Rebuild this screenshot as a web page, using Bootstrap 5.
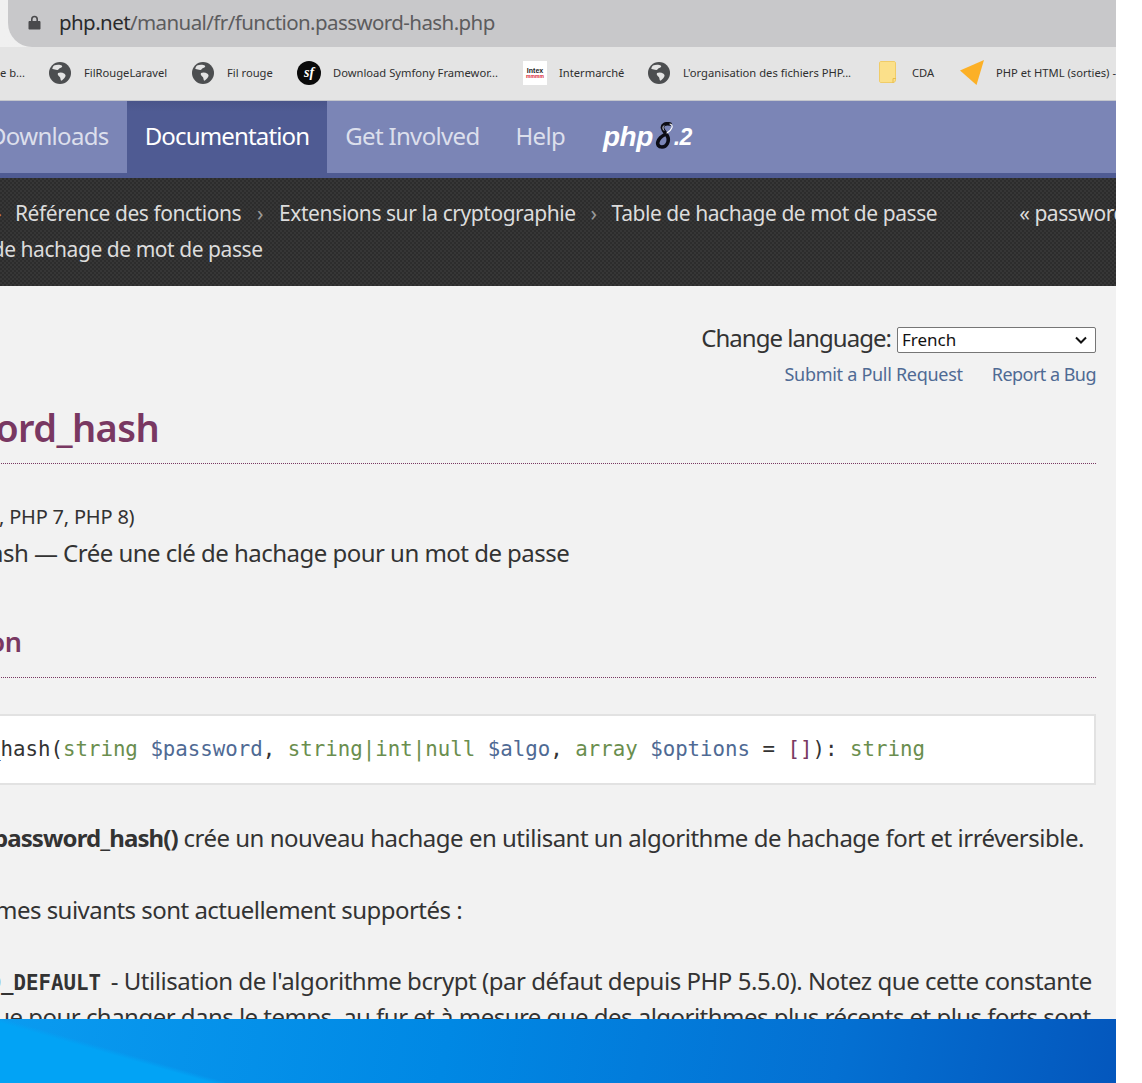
<!DOCTYPE html>
<html lang="fr">
<head>
  <meta charset="UTF-8">
  <title>PHP: password_hash - Manual</title>
  <link href="https://cdn.jsdelivr.net/npm/bootstrap@5.3.0/dist/css/bootstrap.min.css" rel="stylesheet">
  <style>
    html, body { margin: 0; height: 100%; background: #fff; overflow: hidden; }
    .shot { width: 1116px; height: 1083px; font-family: "Noto Sans", sans-serif; color: #333; overflow: hidden; }

    /* browser chrome */
    .url-row { height: 47px; background: linear-gradient(to right, #f0f0f0, #e6e6e6); padding-left: 8px; flex: none; }
    .url-pill { height: 47px; background: #c8c8ca; border-radius: 0 0 0 24px; padding: 0 0 3px 20px; gap: 18px; }
    .url-text { font-size: 20.5px; color: #5c5c5e; letter-spacing: -.58px; }
    .url-text b { font-weight: 400; color: #2a2a2c; }
    .bm-row { height: 54px; padding-bottom: 2px; background: #e4e4e4; border-bottom: 1px solid #c4c6cc; flex: none; font-size: 11.2px; color: #2f2f2f; white-space: nowrap; }
    .bm-item { flex: none; gap: 13px; }
    .bm-tight { gap: 12px; }
    .bm-folder { gap: 15px; }
    .bm-item span { display: block; padding-top: 1px; }
    .bm-first { width: 49px; }
    .bm-1 { width: 143px; }
    .bm-2 { width: 105px; }
    .bm-3 { width: 226px; }
    .bm-4 { width: 125px; }
    .bm-5 { width: 231px; }
    .bm-6 { width: 81px; }
    .sf-mark { width: 24px; height: 24px; border-radius: 50%; background: #0a0a0a; color: #fff; font: italic 700 14px/24px "Liberation Serif", serif; text-align: center; }
    .im-mark { width: 24px; height: 24px; background: #fff; text-align: center; font: 700 7px/7px "Liberation Sans", sans-serif; color: #222; padding-top: 6px; }
    .im-mark i { display: block; font-style: normal; font-size: 5px; line-height: 5px; color: #d8232f; }

    /* php.net nav */
    .php-nav { height: 77px; background: #7b85b6; border-bottom: 5px solid #4f5b93; flex: none; margin-left: -29px; font-size: 24px; white-space: nowrap; }
    .php-nav a { display: block; padding: 0 18px; line-height: 70px; text-decoration: none; }
    .php-nav a.on { background: linear-gradient(#4a558a, #4f5b93 15%, #4f5b93); color: #fff; letter-spacing: -.035em; }
    .php-nav a.off { color: #dcdfec; letter-spacing: -.028em; }
    .logo-wrap { margin-left: 20px; font: italic 700 28px/1 "Liberation Sans", sans-serif; color: #fff; letter-spacing: -.02em; }
    .logo-wrap svg { margin: 0 -3px 0 0; }
    .logo-wrap em { font-size: 23px; }

    /* breadcrumbs */
    .crumbs { height: 108px; flex: none; background: #303030 repeating-conic-gradient(#2c2c2c 0 25%, #363636 0 50%) 0 0 / 4px 4px; color: #dcdcdc; font-size: 21px; white-space: nowrap; letter-spacing: -.45px; padding-top: 17px; }
    .crumbs .sep { color: #9b9b9b; width: 38px; text-align: center; flex: none; }
    .crumbs .sep-b { width: 36px; }
    .crumbs .sep-first { color: #e2a13c; width: 20px; margin-left: -5px; flex: none; }
    .crumb-line { height: 36px; line-height: 36px; }
    .prev-link { margin-left: 82px; }
    .crumb-2 { margin-left: -63px; }

    /* manual */
    .manual { flex: 1 1 auto; min-height: 0; overflow: hidden; background: #f2f2f2; white-space: nowrap; font-size: 24px; line-height: 36px; letter-spacing: -.022em; }
    .pad-r { padding-right: 20px; }
    .lang-row { margin-top: 41px; height: 26px; line-height: 26px; gap: 6px; }
    .lang-row label { padding-bottom: 4px; letter-spacing: -.04em; }
    .lang-sel { width: 199px; height: 26px; font: 17px/20px "Noto Sans", sans-serif; padding: 0 0 0 4px; border: 1px solid #767676; border-radius: 2px; color: #111; appearance: none; background: #fff url("data:image/svg+xml,%3Csvg xmlns='http://www.w3.org/2000/svg' width='12' height='8'%3E%3Cpath d='M1 1.500 6 6.500 11 1.500' fill='none' stroke='%23111' stroke-width='2'/%3E%3C/svg%3E") no-repeat right 8px center; }
    .edit-links { margin-top: 8px; height: 26px; line-height: 26px; font-size: 18px; gap: 29px; }
    .edit-links a { color: #4f6a94; text-decoration: none; }
    .edit-links a:first-child { letter-spacing: -.016em; }
    .plum { color: #793862; }
    .doc-h1 { margin: 10px 0 0 -117px; padding-bottom: 6px; height: 67px; font-size: 38px; line-height: 60px; font-weight: 600; letter-spacing: -.015em; border-bottom: 1px dotted #793862; width: 1213px; }
    .ver { margin: 38px 0 0 -138px; line-height: 30px; font-size: 20px; letter-spacing: -.01em; color: #333; }
    .refname { margin: 3px 0 0 -139px; }
    .doc-h2 { margin: 51px 0 0 -124px; padding-bottom: 15px; height: 56px; font-size: 27px; line-height: 40px; font-weight: 600; border-bottom: 1px dotted #793862; width: 1220px; }
    .sig { margin: 36px 20px 0 -20px; height: 71px; background: #fff; border: 2px solid #e2e2e2; font: 20.75px/66px "DejaVu Sans Mono", monospace; color: #333; letter-spacing: 0; overflow: hidden; }
    .sig-inner { margin-left: -94px; }
    .ty { color: #6a8e4e; }
    .va { color: #4f6a94; }
    .para1 { margin: 35px 0 0 -7px; letter-spacing: -.0205em; }
    .para2 { margin: 36px 0 0 -131px; }
    .para3 { margin: 35px 0 0 -99px; letter-spacing: -.019em; }
    .para4 { margin: 0 0 0 -19px; }
    .para3 code { font: 700 20.75px "DejaVu Sans Mono", monospace; color: #333; letter-spacing: 0; margin-right: 4px; }
    .para1 strong { letter-spacing: -.038em; }

    .taskbar { height: 64px; flex: none; background:
      linear-gradient(to bottom left, rgba(2,163,245,0) 49%, #02a3f5 53%) 0 0 / 225px 64px no-repeat,
      linear-gradient(100deg, #0a9bf0 0, #0088e4 40%, #0470d2 75%, #0457bd 100%); }
  </style>
</head>
<body>
<div class="shot d-flex flex-column">

  <div class="url-row">
    <div class="url-pill d-flex align-items-center">
      <svg width="13" height="15" viewBox="0 0 13 15"><path d="M3 6V4.2a3.500 3.500 0 0 1 7 0V6h1.400c.6 0 1.100.5 1.100 1.100v6.300c0 .6-.5 1.100-1.100 1.100H1.600C1 14.500.5 14 .5 13.400V7.100C.5 6.500 1 6 1.600 6zM4.600 6h3.800V4.200a1.900 1.900 0 0 0-3.800 0z" fill="#4a4a4c"/></svg>
      <div class="url-text"><b>php.net</b>/manual/fr/function.password-hash.php</div>
    </div>
  </div>

  <div class="bm-row d-flex align-items-center">
    <div class="bm-item bm-first"><span>e b...</span></div>
    <div class="bm-item bm-1 d-flex align-items-center">
      <svg width="22" height="22" viewBox="0 0 22 22"><circle cx="11" cy="11" r="11" fill="#4c4e50"/><path d="M5 3.500c2.500-1 6-1.200 8 .3.800.9-.5 1.900-2 2.300-1.200.4-1 1.800-2.400 1.800C6.500 8.100 5 6.800 3.300 7 3.500 5.500 4 4.400 5 3.500zM9 11c2-.9 4.500-.6 6.500.7 1 .7 1.500 2 .6 3.300-1 1.700-2.600 3.200-4 3.800-.8-1.400-.5-2.800-1.300-3.700C9.800 14.200 8 12.700 9 11z" fill="#e4e4e4"/></svg>
      <span>FilRougeLaravel</span>
    </div>
    <div class="bm-item bm-2 d-flex align-items-center">
      <svg width="22" height="22" viewBox="0 0 22 22"><circle cx="11" cy="11" r="11" fill="#4c4e50"/><path d="M5 3.500c2.500-1 6-1.200 8 .3.800.9-.5 1.900-2 2.300-1.200.4-1 1.800-2.400 1.800C6.500 8.100 5 6.800 3.300 7 3.500 5.500 4 4.400 5 3.500zM9 11c2-.9 4.500-.6 6.500.7 1 .7 1.500 2 .6 3.300-1 1.700-2.600 3.200-4 3.800-.8-1.400-.5-2.800-1.300-3.700C9.800 14.200 8 12.700 9 11z" fill="#e4e4e4"/></svg>
      <span>Fil rouge</span>
    </div>
    <div class="bm-item bm-tight bm-3 d-flex align-items-center">
      <div class="sf-mark">sf</div>
      <span>Download Symfony Framewor...</span>
    </div>
    <div class="bm-item bm-tight bm-4 d-flex align-items-center">
      <div class="im-mark">Intex<i>mmmm</i></div>
      <span>Intermarché</span>
    </div>
    <div class="bm-item bm-5 d-flex align-items-center">
      <svg width="22" height="22" viewBox="0 0 22 22"><circle cx="11" cy="11" r="11" fill="#4c4e50"/><path d="M5 3.500c2.500-1 6-1.200 8 .3.800.9-.5 1.900-2 2.300-1.200.4-1 1.800-2.400 1.800C6.500 8.100 5 6.800 3.300 7 3.500 5.500 4 4.400 5 3.500zM9 11c2-.9 4.500-.6 6.500.7 1 .7 1.500 2 .6 3.300-1 1.700-2.600 3.200-4 3.800-.8-1.400-.5-2.800-1.300-3.700C9.800 14.200 8 12.700 9 11z" fill="#e4e4e4"/></svg>
      <span>L'organisation des fichiers PHP...</span>
    </div>
    <div class="bm-item bm-folder bm-6 d-flex align-items-center">
      <svg width="18" height="23" viewBox="0 0 18 23"><path d="M2 .5h13c1 0 1.500.5 1.500 1.500v17c0 1.500-1 2.500-2.500 2.500H2c-1 0-1.500-.5-1.500-1.500V2C.5 1 1 .5 2 .5z" fill="#fbe08a" stroke="#f0cc68"/><path d="M14 22v-4.500h3" fill="none" stroke="#e8bd4c"/></svg>
      <span>CDA</span>
    </div>
    <div class="bm-item bm-tight d-flex align-items-center">
      <svg width="24" height="25" viewBox="0 0 24 25"><path d="M0 10.500 24 0l-7.500 25z" fill="#fcb026"/></svg>
      <span>PHP et HTML (sorties) -</span>
    </div>
  </div>

  <nav class="php-nav d-flex">
    <a href="#" class="off">Downloads</a>
    <a href="#" class="on">Documentation</a>
    <a href="#" class="off">Get Involved</a>
    <a href="#" class="off">Help</a>
    <div class="logo-wrap d-flex align-items-center">
      php<svg width="24" height="30" viewBox="0 0 24 30"><path d="M17 2C12 1 9 3 9.500 6c.5 3 4.500 6 5.500 9.500 1 4-1 9.500-6 9.500-3.500 0-5-2.500-4-5.500 1-3 4-5.500 7-7" fill="none" stroke="#0c0c14" stroke-width="3.600" stroke-linecap="round"/><path d="M17 2c2 .5 2.500 2 2 3.500-.7 2-2.600 4-5 5.500" fill="none" stroke="#fff" stroke-width="1.100" stroke-linecap="round"/><path d="M11 3.500C9.600 4.800 9.600 7 11 8.500" fill="none" stroke="#dfe2f0" stroke-width="1"/></svg><em>.2</em>
    </div>
  </nav>

  <div class="crumbs">
    <div class="crumb-line d-flex">
      <span class="sep-first">›</span>
      <span>Référence des fonctions</span>
      <span class="sep">›</span>
      <span>Extensions sur la cryptographie</span>
      <span class="sep sep-b">›</span>
      <span>Table de hachage de mot de passe</span>
      <span class="prev-link">« password_get_info</span>
    </div>
    <div class="crumb-line crumb-2">Table de hachage de mot de passe</div>
  </div>

  <main class="manual">
    <div class="lang-row pad-r d-flex justify-content-end align-items-center">
      <label for="lang">Change language:</label>
      <select id="lang" class="lang-sel"><option>French</option></select>
    </div>
    <div class="edit-links pad-r d-flex justify-content-end">
      <a href="#">Submit a Pull Request</a>
      <a href="#">Report a Bug</a>
    </div>

    <h1 class="doc-h1 plum">password_hash</h1>
    <p class="ver mb-0">(PHP 5 &gt;= 5.5.0, PHP 7, PHP 8)</p>
    <p class="refname mb-0">password_hash — Crée une clé de hachage pour un mot de passe</p>

    <h2 class="doc-h2 plum">Description</h2>
    <div class="sig"><div class="sig-inner">password_hash(<span class="ty">string</span> <span class="va">$password</span>, <span class="ty">string|int|null</span> <span class="va">$algo</span>, <span class="ty">array</span> <span class="va">$options</span> = <span class="plum">[]</span>): <span class="ty">string</span></div></div>

    <p class="para1 mb-0"><strong>password_hash()</strong> crée un nouveau hachage en utilisant un algorithme de hachage fort et irréversible.</p>
    <p class="para2 mb-0">Les algorithmes suivants sont actuellement supportés :</p>
    <p class="para3 mb-0"><code>PASSWORD_DEFAULT</code> - Utilisation de l'algorithme bcrypt (par défaut depuis PHP 5.5.0). Notez que cette constante</p>
    <p class="para4 mb-0">que pour changer dans le temps, au fur et à mesure que des algorithmes plus récents et plus forts sont</p>
  </main>

  <div class="taskbar"></div>
</div>
<script src="https://cdn.jsdelivr.net/npm/bootstrap@5.3.0/dist/js/bootstrap.bundle.min.js"></script>
</body>
</html>
